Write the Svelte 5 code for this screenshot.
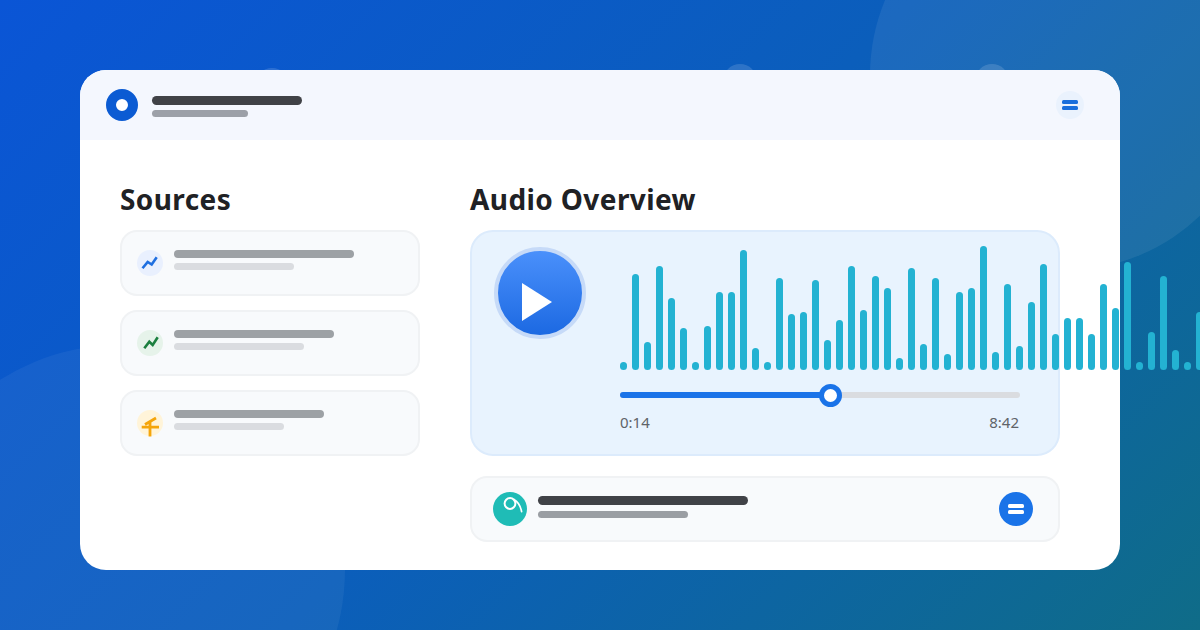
<script>
  const bars = [8,96,28,104,72,42,8,44,78,78,120,22,8,92,56,58,90,30,50,104,60,94,82,12,102,26,92,16,78,82,124,18,86,24,68,106,36,52,52,36,86,62,108,8,38,94,20,8,58];
  const sources = [
    { a: 180, b: 120, tone: 'blue' },
    { a: 160, b: 130, tone: 'green' },
    { a: 150, b: 110, tone: 'amber' }
  ];
</script>

<div class="page">
  <div class="blob big"></div>
  <div class="blob low"></div>
  <div class="blob bump b1"></div>
  <div class="blob bump b2"></div>
  <div class="blob bump b3"></div>

  <div class="card">
    <header class="top">
      <div class="logo"></div>
      <div class="lines">
        <div class="bar title"></div>
        <div class="bar subtitle"></div>
      </div>
      <div class="menu"><span></span><span></span></div>
    </header>

    <div class="content">
      <section>
        <h2>Sources</h2>
        <div class="list">
          {#each sources as s}
            <div class="source">
              <svg class="ico {s.tone}" width="26" height="26" viewBox="0 0 26 26">
                <circle class="disc" cx="13" cy="13" r="13" />
                {#if s.tone === 'blue'}
                  <path class="mark" d="M5.5 18.3 10.7 11.9 14.7 14.5 19.7 7.3" />
                {:else if s.tone === 'green'}
                  <path class="mark" d="M7.3 18.3 12.3 11.7 15.7 15 20.7 7.3" />
                {:else}
                  <path class="mark" d="M4.7 17.2H22M8 14.5 19 8M13 12.5V26.5" />
                {/if}
              </svg>
              <div class="lines slim">
                <div class="bar main" style="width:{s.a}px"></div>
                <div class="bar sub" style="width:{s.b}px"></div>
              </div>
            </div>
          {/each}
        </div>
      </section>

      <section>
        <h2>Audio Overview</h2>
        <div class="audio">
          <div class="play">
            <svg width="30" height="38" viewBox="0 0 30 38"><path d="M0 0 30 19 0 38Z" fill="#fff" /></svg>
          </div>
          <div class="player">
            <div class="wave">
              {#each bars as h}
                <i style="height:{h}px"></i>
              {/each}
            </div>
            <div class="track">
              <div class="fill"></div>
              <div class="thumb"></div>
            </div>
            <div class="times"><span>0:14</span><span>8:42</span></div>
          </div>
        </div>

        <div class="now">
          <svg class="avatar" width="34" height="34" viewBox="0 0 34 34">
            <circle cx="17" cy="17" r="17" fill="#1fbcb6" />
            <circle cx="17" cy="11.5" r="5.4" fill="none" stroke="#fff" stroke-width="2" />
            <path d="M21 7.5Q27 11 28.6 19.6" fill="none" stroke="#fff" stroke-width="1.7" stroke-linecap="round" />
          </svg>
          <div class="lines">
            <div class="bar nowtitle"></div>
            <div class="bar nowsub"></div>
          </div>
          <div class="action"><span></span><span></span></div>
        </div>
      </section>
    </div>
  </div>
</div>

<style>
  :global(body) { margin: 0; }
  .page {
    position: relative;
    width: 1200px;
    height: 630px;
    box-sizing: border-box;
    padding: 70px 80px 60px;
    overflow: hidden;
    background: linear-gradient(135deg, #0a55d6 0%, #0b5ebb 50%, #0f6c88 100%);
    font-family: "Noto Sans", sans-serif;
  }
  .blob { position: absolute; border-radius: 50%; background: rgba(255,255,255,.07); }
  .big { left: 870px; top: -120px; width: 390px; height: 390px; }
  .low { left: -105px; top: 345px; width: 450px; height: 450px; background: rgba(255,255,255,.05); }
  .bump { width: 34px; height: 34px; top: 64px; background: rgba(255,255,255,.14); }
  .b1 { left: 255px; top: 68px; }
  .b2 { left: 723px; }
  .b3 { left: 975px; }

  .card {
    position: relative;
    height: 500px;
    border-radius: 26px;
    background: #fff;
  }
  .top {
    display: flex;
    align-items: center;
    height: 70px;
    box-sizing: border-box;
    padding: 0 36px 0 26px;
    border-radius: 26px 26px 0 0;
    background: #f4f7fe;
  }
  .logo {
    width: 12px;
    height: 12px;
    border: 10px solid #0b5bd3;
    border-radius: 50%;
    background: #fff;
    margin-right: 14px;
  }
  .lines { display: flex; flex-direction: column; align-items: flex-start; }
  .top .lines { margin-top: 3px; }
  .bar { border-radius: 5px; }
  .title { width: 150px; height: 9px; background: #404247; }
  .subtitle { width: 96px; height: 7px; margin-top: 5px; background: #9ca0a8; }
  .menu {
    display: flex;
    flex-direction: column;
    justify-content: center;
    align-items: center;
    gap: 2.6px;
    width: 28px;
    height: 28px;
    margin-left: auto;
    border-radius: 50%;
    background: #eaf2fd;
  }
  .menu span { width: 16px; height: 3.5px; border-radius: 1.5px; background: #1a6fdc; }

  .content {
    display: grid;
    grid-template-columns: 300px 590px;
    column-gap: 50px;
    padding: 40px 0 0 40px;
  }
  h2 {
    margin: -1px 0 11px;
    height: 40px;
    font-size: 28px;
    line-height: 40px;
    font-weight: 700;
    letter-spacing: .4px;
    color: #202124;
  }
  .list { display: flex; flex-direction: column; gap: 14px; }
  .source {
    display: flex;
    align-items: flex-start;
    gap: 11px;
    height: 66px;
    box-sizing: border-box;
    padding: 18px 15px;
    border: 2px solid #f0f2f4;
    border-radius: 17px;
    background: #f8fafc;
  }
  .ico { overflow: visible; flex: none; }
  .mark { fill: none; stroke-width: 2.6; }
  .blue .disc { fill: #e9f0fe; }
  .blue .mark { stroke: #1f6fe0; }
  .green .disc { fill: #e6f3ea; }
  .green .mark { stroke: #1b7f3f; }
  .amber .disc { fill: #fff4d9; }
  .amber .mark { stroke: #f5a50a; stroke-width: 2.8; }
  .main { height: 8px; background: #9da1a5; }
  .sub { height: 7px; margin-top: 5px; background: #dadce0; }

  .audio {
    display: flex;
    gap: 34px;
    height: 226px;
    box-sizing: border-box;
    padding: 14px 22px;
    border: 2px solid #dcebfc;
    border-radius: 23px;
    background: #e8f3fe;
  }
  .play {
    display: flex;
    align-items: center;
    justify-content: center;
    flex: none;
    width: 84px;
    height: 84px;
    margin-top: 1px;
    border: 4px solid #c6daf8;
    border-radius: 50%;
    background: linear-gradient(180deg, #4a90fb 0%, #1c69e2 100%);
  }
  .play svg { margin-right: 7px; margin-top: 18px; }
  .player { width: 400px; }
  .wave { display: flex; align-items: flex-end; gap: 5px; height: 124px; }
  .wave i { flex: none; width: 7px; border-radius: 4px; background: #23b2d2; }
  .track {
    position: relative;
    height: 6px;
    margin-top: 22px;
    border-radius: 3px;
    background: #dadce0;
  }
  .fill { width: 210px; height: 6px; border-radius: 3px; background: #1a73e8; }
  .thumb {
    position: absolute;
    left: 198.5px;
    top: -8.5px;
    width: 13px;
    height: 13px;
    border: 5px solid #1a73e8;
    border-radius: 50%;
    background: #fff;
  }
  .times {
    display: flex;
    justify-content: space-between;
    margin-top: 14px;
    padding-right: 1px;
    font-size: 15px;
    line-height: 20px;
    color: #5f6368;
  }
  .now {
    display: flex;
    align-items: flex-start;
    gap: 11px;
    height: 66px;
    box-sizing: border-box;
    margin-top: 20px;
    padding: 14px 25px 14px 21px;
    border: 2px solid #f0f2f4;
    border-radius: 17px;
    background: #f8fafc;
  }
  .avatar { flex: none; }
  .now .lines { margin-top: 4px; }
  .nowtitle { width: 210px; height: 9px; background: #404247; }
  .nowsub { width: 150px; height: 7px; margin-top: 6px; background: #9a9ea3; }
  .action {
    display: flex;
    flex-direction: column;
    justify-content: center;
    align-items: center;
    gap: 2.8px;
    width: 34px;
    height: 34px;
    margin-left: auto;
    border-radius: 50%;
    background: #1a73e8;
  }
  .action span { width: 16px; height: 3.3px; border-radius: 1.5px; background: #fff; }
</style>
